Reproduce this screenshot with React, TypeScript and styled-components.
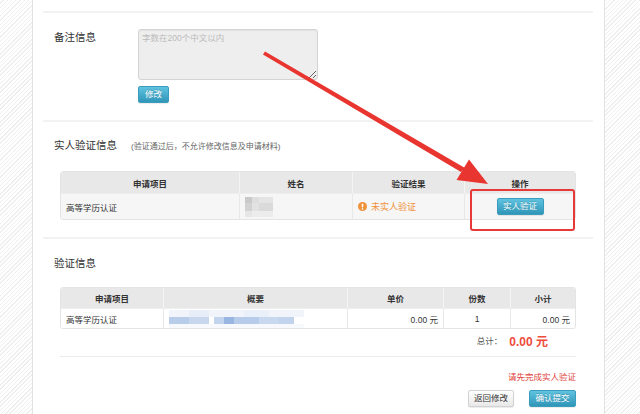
import React from "react";
import styled, { createGlobalStyle } from "styled-components";

const GlobalStyle = createGlobalStyle`
  html, body {
    margin: 0;
    padding: 0;
  }
  body {
    background-color: #fff;
    background-image: repeating-linear-gradient(
      135deg,
      #fff 0px,
      #fff 2px,
      #efefef 2px,
      #efefef 3px
    );
    font-family: "Liberation Sans", "Noto Sans CJK SC", sans-serif;
    color: #333;
  }
`;

const Page = styled.div`
  position: relative;
  width: 640px;
  height: 414px;
  overflow: hidden;
`;

const Panel = styled.div`
  box-sizing: border-box;
  margin-left: 32px;
  width: 573px;
  min-height: 414px;
  padding: 11px 11px 0 10px;
  background: #fff;
  border-left: 1px solid #e2e2e2;
  border-right: 1px solid #e2e2e2;
`;

const Section = styled.div<{ $top: number; $bottom: number }>`
  border-top: 2px solid #f2f2f2;
  padding: ${(p) => p.$top}px 0 ${(p) => p.$bottom}px;
`;

const FormRow = styled.div`
  display: flex;
  padding-left: 11px;
`;

const Label = styled.div`
  width: 84px;
  font-size: 10.5px;
  line-height: 16px;
  color: #333;
`;

const FieldCol = styled.div`
  display: flex;
  flex-direction: column;
  align-items: flex-start;
  gap: 6px;
`;

const RemarkBox = styled.textarea`
  box-sizing: border-box;
  width: 180px;
  height: 51px;
  margin: 0;
  padding: 3px 3px;
  background: #eee;
  border: 1px solid #d4d4d4;
  border-radius: 3px;
  font-family: inherit;
  font-size: 8.5px;
  line-height: 11px;
  color: #999;
  box-shadow: inset 0 1px 1px rgba(0, 0, 0, 0.05);
  &::placeholder {
    color: #bbb;
  }
`;

const Button = styled.button<{ $primary?: boolean; $w: number }>`
  box-sizing: border-box;
  width: ${(p) => p.$w}px;
  height: 17px;
  padding: 0;
  margin: 0;
  border-radius: 2px;
  font-family: inherit;
  font-size: 8.5px;
  line-height: 15px;
  cursor: pointer;
  border: 1px solid ${(p) => (p.$primary ? "#3a9dbd" : "#d2d2d2")};
  color: ${(p) => (p.$primary ? "#fff" : "#333")};
  background-image: ${(p) =>
    p.$primary
      ? "linear-gradient(#5fc3e0, #3096b8)"
      : "linear-gradient(#fff, #e8e8e8)"};
  text-shadow: ${(p) =>
    p.$primary ? "0 -1px 0 rgba(0,0,0,.2)" : "0 1px 1px rgba(255,255,255,.7)"};
  box-shadow: 0 1px 1px rgba(0, 0, 0, 0.08);
`;

const TitleRow = styled.div`
  display: flex;
  align-items: baseline;
  padding-left: 11px;
  height: 16px;
`;

const Title = styled.div`
  font-size: 10.5px;
  line-height: 16px;
  color: #333;
`;

const Note = styled.span`
  margin-left: 14px;
  font-size: 8px;
  color: #666;
`;

const Table = styled.table<{ $mt: number }>`
  box-sizing: border-box;
  width: 516px;
  margin: ${(p) => p.$mt}px 0 0 17px;
  border-collapse: separate;
  border-spacing: 0;
  border: 1px solid #e4e4e4;
  border-radius: 3px;
  overflow: hidden;
  table-layout: fixed;
  font-size: 8.5px;
  color: #333;
`;

const Th = styled.th<{ $h: number }>`
  height: ${(p) => p.$h}px;
  padding: 0;
  background: #e8e8e8;
  font-weight: bold;
  text-align: center;
  border-left: 1px solid #f4f4f4;
  &:first-child {
    border-left: none;
  }
`;

const Td = styled.td<{ $h: number; $bg: string; $align?: string }>`
  height: ${(p) => p.$h}px;
  padding: 0 5px;
  background: ${(p) => p.$bg};
  text-align: ${(p) => p.$align || "left"};
  border-left: 1px solid #e8e8e8;
  border-top: 1px solid #eee;
  &:first-child {
    border-left: none;
  }
`;

const Pending = styled.span`
  display: inline-flex;
  align-items: center;
  gap: 4px;
  color: #f0923a;
  font-size: 9px;
`;

const TotalRow = styled.div`
  display: flex;
  justify-content: flex-end;
  align-items: center;
  gap: 7px;
  height: 22px;
  padding-right: 45px;
`;

const TotalLabel = styled.span`
  font-size: 8.5px;
  color: #555;
`;

const TotalValue = styled.span`
  font-size: 12px;
  font-weight: bold;
  color: #ee4b3a;
`;

const InnerRule = styled.div`
  margin: 5px 17px 0;
  border-top: 1px solid #ebebeb;
`;

const Warning = styled.div`
  margin: 14px 17px 0 0;
  text-align: right;
  font-size: 8.5px;
  line-height: 12px;
  color: #e0413a;
`;

const Actions = styled.div`
  display: flex;
  justify-content: flex-end;
  gap: 15px;
  margin: 7px 17px 0 0;
`;

const Highlight = styled.div`
  position: absolute;
  left: 470px;
  top: 189px;
  width: 105px;
  height: 42px;
  box-sizing: border-box;
  border: 2px solid #e63a3a;
  border-radius: 3px;
`;

const Overlay = styled.svg`
  position: absolute;
  left: 0;
  top: 0;
  pointer-events: none;
`;

type Block = [number, number, number, number, string];

const Mosaic = ({ blocks, w, h }: { blocks: Block[]; w: number; h: number }) => (
  <svg width={w} height={h} style={{ display: "block" }}>
    {blocks.map(([x, y, bw, bh, c], i) => (
      <rect key={i} x={x} y={y} width={bw} height={bh} fill={c} />
    ))}
  </svg>
);

const nameBlur: Block[] = [
  [0, 0, 7, 6, "#c9c9c9"],
  [7, 0, 7, 6, "#dedede"],
  [14, 0, 14, 6, "#e4e4e4"],
  [0, 6, 7, 8, "#d2d2d2"],
  [7, 6, 7, 8, "#e2e2e2"],
  [14, 6, 14, 8, "#dadada"],
  [0, 14, 7, 6, "#e6e6e6"],
  [7, 14, 21, 6, "#ececec"],
];

const summaryBlur: Block[] = [
  [0, 0, 135, 7, "#f1f5fb"],
  [20, 0, 20, 7, "#e8eef8"],
  [75, 0, 25, 7, "#eaf0f9"],
  [0, 7, 20, 7, "#b8cdea"],
  [20, 7, 20, 7, "#c6d7ee"],
  [45, 7, 12, 7, "#c3d5ee"],
  [55, 7, 10, 7, "#98b6e1"],
  [65, 7, 25, 7, "#b7cceb"],
  [90, 7, 20, 7, "#c8d8ef"],
  [110, 7, 15, 7, "#c1d3ed"],
  [0, 14, 135, 4, "#f7f9fc"],
];

const WarnIcon = () => (
  <svg width="9" height="9" viewBox="0 0 10 10">
    <circle cx="5" cy="5" r="5" fill="#f0923a" />
    <rect x="4.2" y="2" width="1.6" height="4" rx="0.6" fill="#fff" />
    <circle cx="5" cy="7.7" r="0.9" fill="#fff" />
  </svg>
);

const App = () => {
  return (
    <Page>
      <GlobalStyle />
      <Panel>
        <Section $top={16} $bottom={17}>
          <FormRow>
            <Label>备注信息</Label>
            <FieldCol>
              <RemarkBox disabled placeholder="字数在200个中文以内" />
              <Button $primary $w={31}>修改</Button>
            </FieldCol>
          </FormRow>
        </Section>

        <Section $top={15} $bottom={17}>
          <TitleRow>
            <Title>实人验证信息</Title>
            <Note>(验证通过后，不允许修改信息及申请材料)</Note>
          </TitleRow>
          <Table $mt={18}>
            <colgroup>
              <col style={{ width: 178 }} />
              <col style={{ width: 113 }} />
              <col style={{ width: 112 }} />
              <col />
            </colgroup>
            <thead>
              <tr>
                <Th $h={21}>申请项目</Th>
                <Th $h={21}>姓名</Th>
                <Th $h={21}>验证结果</Th>
                <Th $h={21}>操作</Th>
              </tr>
            </thead>
            <tbody>
              <tr>
                <Td $h={25} $bg="#f6f6f6">高等学历认证</Td>
                <Td $h={25} $bg="#f6f6f6">
                  <Mosaic blocks={nameBlur} w={28} h={20} />
                </Td>
                <Td $h={25} $bg="#f6f6f6">
                  <Pending>
                    <WarnIcon />
                    未实人验证
                  </Pending>
                </Td>
                <Td $h={25} $bg="#f6f6f6" $align="center">
                  <Button $primary $w={47}>实人验证</Button>
                </Td>
              </tr>
            </tbody>
          </Table>
        </Section>

        <Section $top={16} $bottom={0}>
          <TitleRow>
            <Title>验证信息</Title>
          </TitleRow>
          <Table $mt={16}>
            <colgroup>
              <col style={{ width: 102 }} />
              <col style={{ width: 184 }} />
              <col style={{ width: 96 }} />
              <col style={{ width: 67 }} />
              <col />
            </colgroup>
            <thead>
              <tr>
                <Th $h={20}>申请项目</Th>
                <Th $h={20}>概要</Th>
                <Th $h={20}>单价</Th>
                <Th $h={20}>份数</Th>
                <Th $h={20}>小计</Th>
              </tr>
            </thead>
            <tbody>
              <tr>
                <Td $h={19} $bg="#fff">高等学历认证</Td>
                <Td $h={19} $bg="#fff">
                  <Mosaic blocks={summaryBlur} w={135} h={18} />
                </Td>
                <Td $h={19} $bg="#fff" $align="right">0.00 元</Td>
                <Td $h={19} $bg="#fff" $align="center">1</Td>
                <Td $h={19} $bg="#fff" $align="right">0.00 元</Td>
              </tr>
            </tbody>
          </Table>
          <TotalRow>
            <TotalLabel>总计：</TotalLabel>
            <TotalValue>0.00 元</TotalValue>
          </TotalRow>
          <InnerRule />
          <Warning>请先完成实人验证</Warning>
          <Actions>
            <Button $w={46}>返回修改</Button>
            <Button $primary $w={47}>确认提交</Button>
          </Actions>
        </Section>
      </Panel>

      <Highlight />
      <Overlay width="640" height="414" viewBox="0 0 640 414">
        <polygon points="263,54.5 265,51.5 465,168 461,172" fill="#e8352f" />
        <polygon points="488,184 456.5,180 469,159.5" fill="#e8352f" />
      </Overlay>
    </Page>
  );
};

export default App;
